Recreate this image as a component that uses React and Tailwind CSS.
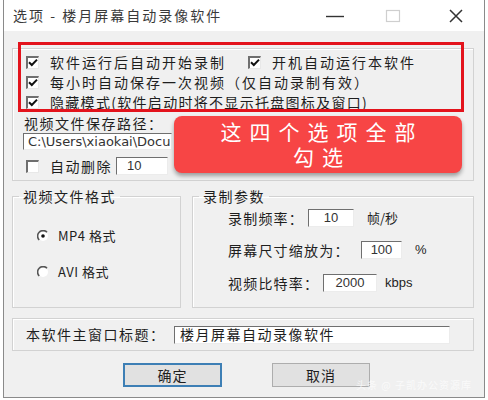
const CJK = "font-['Noto_Sans_CJK_SC','Noto_Sans',sans-serif]";

function Check({ checked }) {
  return (
    <span className="w-[13px] h-[13px] shrink-0 bg-white border-t-[2px] border-l-[2px] border-t-[#6f6f6f] border-l-[#6f6f6f] border-b border-r border-b-[#e8e8e8] border-r-[#e8e8e8] flex items-center justify-center">
      {checked && (
        <svg width="10" height="9" viewBox="0 0 10 9">
          <path d="M1 4.2 L3.8 7 L9 1.6" fill="none" stroke="#111" strokeWidth="2" />
        </svg>
      )}
    </span>
  );
}

function Radio({ checked }) {
  return (
    <svg width="12" height="12" viewBox="0 0 12 12" className="shrink-0">
      <circle cx="6" cy="6" r="5" fill="#fff" />
      <path d="M10 2.2 A5.2 5.2 0 0 0 2.2 10" fill="none" stroke="#555" strokeWidth="1.6" />
      {checked && <circle cx="6" cy="6" r="1.8" fill="#111" />}
    </svg>
  );
}

function Field({ className, value, align = 'text-center', font = "font-['Liberation_Sans',sans-serif]" }) {
  return (
    <div className={`bg-white border-t border-l border-t-[#6f6f6f] border-l-[#6f6f6f] border-b border-r border-b-[#ececec] border-r-[#ececec] flex items-center text-[13px] text-[#333] overflow-hidden whitespace-nowrap ${align} ${font} ${className}`}>
      <span className="w-full">{value}</span>
    </div>
  );
}

export default function App() {
  return (
    <div className={`relative w-[488px] h-[400px] bg-white px-[3px] pb-[2px] ${CJK} text-[14px] text-[#1e1e1e]`}>
      <div className="h-full flex flex-col border-x border-b border-[#8a8a8a]">
        {/* title bar */}
        <div className="h-[31px] shrink-0 bg-white flex items-center pl-[9px] pr-[20px]">
          <span className="tracking-[2px] text-[#3a3a3a]">选项 - 楼月屏幕自动录像软件</span>
          <div className="flex-1" />
          <svg width="20" height="12" viewBox="0 0 20 12" className="mr-[40px]">
            <path d="M1 6.5 H19" stroke="#333" strokeWidth="1.4" />
          </svg>
          <svg width="16" height="14" viewBox="0 0 16 14" className="mr-[47px]">
            <rect x="1.5" y="1.5" width="13" height="11" fill="none" stroke="#cfcfcf" strokeWidth="1.2" />
          </svg>
          <svg width="16" height="16" viewBox="0 0 16 16">
            <path d="M2 2 L14 14 M14 2 L2 14" stroke="#333" strokeWidth="1.5" />
          </svg>
        </div>

        {/* body */}
        <div className="flex-1 bg-[#f0f0f0] pl-[8px] pr-[10px] pt-[17px] flex flex-col">
          {/* options group */}
          <div className="h-[133px] border border-[#d2d2d2] shadow-[inset_1px_1px_0_#fff] pl-[13px] pt-[3px] flex flex-col">
            <div className="h-[20px] flex items-center tracking-[2px]">
              <Check checked />
              <span className="ml-[11px] w-[198px]">软件运行后自动开始录制</span>
              <Check checked />
              <span className="ml-[11px]">开机自动运行本软件</span>
            </div>
            <div className="h-[20px] flex items-center tracking-[2px]">
              <Check checked />
              <span className="ml-[11px]">每小时自动保存一次视频（仅自动录制有效）</span>
            </div>
            <div className="h-[20px] flex items-center tracking-[1.3px]">
              <Check checked />
              <span className="ml-[11px]">隐藏模式(软件启动时将不显示托盘图标及窗口)</span>
            </div>
            <div className="h-[20px] mt-[1px] flex items-center tracking-[1.5px] -ml-[2px]">视频文件保存路径：</div>
            <Field
              className="h-[17px] w-[149px] -ml-[3px] pl-[4px]"
              align="text-left"
              font="font-['DejaVu_Sans',sans-serif]"
              value="C:\Users\xiaokai\Docu"
            />
            <div className="h-[18px] mt-[7px] flex items-center">
              <Check />
              <span className="ml-[11px] tracking-[1.5px]">自动删除</span>
              <Field className="h-[18px] w-[52px] ml-[4px] pl-[10px]" align="text-left" value="10" />
            </div>
          </div>

          {/* format + params */}
          <div className="flex gap-[11px] mt-[5px]">
            <fieldset className="w-[169px] h-[122px] border border-[#d2d2d2] shadow-[inset_1px_1px_0_#fff]">
              <legend className="ml-[6px] px-[4px] leading-[20px] tracking-[1.5px]">视频文件格式</legend>
              <div className="pl-[24px]">
                <div className="h-[20px] mt-[20px] flex items-center">
                  <Radio checked />
                  <span className="ml-[9px] text-[13px] tracking-[0.5px]">MP4 格式</span>
                </div>
                <div className="h-[20px] mt-[16px] flex items-center">
                  <Radio />
                  <span className="ml-[9px] text-[13px] tracking-[0.5px]">AVI 格式</span>
                </div>
              </div>
            </fieldset>
            <fieldset className="w-[282px] h-[122px] border border-[#d2d2d2] shadow-[inset_1px_1px_0_#fff]">
              <legend className="ml-[6px] px-[4px] leading-[20px] tracking-[1.5px]">录制参数</legend>
              <div className="pl-[35px]">
                <div className="h-[18px] mt-[3px] flex items-center">
                  <span className="w-[80px] tracking-[1.2px]">录制频率：</span>
                  <Field className="h-[18px] w-[46px]" value="10" />
                  <span className="ml-[13px] text-[13px]">帧/秒</span>
                </div>
                <div className="h-[18px] mt-[14px] flex items-center">
                  <span className="w-[133px] tracking-[1.2px]">屏幕尺寸缩放为：</span>
                  <Field className="h-[18px] w-[41px]" value="100" />
                  <span className="ml-[13px] text-[13px] font-['Liberation_Sans',sans-serif]">%</span>
                </div>
                <div className="h-[18px] mt-[15px] flex items-center">
                  <span className="w-[95px] tracking-[1.2px]">视频比特率：</span>
                  <Field className="h-[18px] w-[54px]" value="2000" />
                  <span className="ml-[8px] text-[13px] font-['Liberation_Sans',sans-serif]">kbps</span>
                </div>
              </div>
            </fieldset>
          </div>

          {/* main window title */}
          <div className="h-[33px] mt-[10px] border border-[#d2d2d2] shadow-[inset_1px_1px_0_#fff] pl-[13px] flex items-center">
            <span className="w-[148px] tracking-[1.5px]">本软件主窗口标题：</span>
            <Field
              className="h-[18px] w-[276px] pl-[5px]"
              align="text-left"
              font={CJK}
              value={<span className="text-[14px] text-[#1e1e1e] tracking-[1.5px]">楼月屏幕自动录像软件</span>}
            />
          </div>

          {/* buttons */}
          <div className="flex mt-[12px] pl-[111px] gap-[50px]">
            <button className="w-[99px] h-[24px] bg-[#e1e1e1] border-2 border-[#3d7fb5] text-[14px] tracking-[1px]">确定</button>
            <button className="w-[98px] h-[24px] bg-[#e1e1e1] border border-[#adadad] text-[14px] tracking-[1px]">取消</button>
          </div>
        </div>
      </div>

      {/* annotation overlays */}
      <div className="absolute left-[18px] top-[42px] w-[446px] h-[70px] border-[3px] border-[#e3131c]" />
      <div className="absolute left-[174px] top-[116px] w-[288px] h-[57px] rounded-[8px] bg-[#f74545] shadow-[0_3px_4px_rgba(0,0,0,0.35)] flex flex-col items-center pt-[3px] text-white text-[21px] leading-[25px] tracking-[8px] pl-[8px]">
        <span>这四个选项全部</span>
        <span>勾选</span>
      </div>
      <div className="absolute left-[356px] top-[377px] text-[10px] text-white/70 tracking-[1px]">头条 @ 子凯办公资源库</div>
    </div>
  );
}
